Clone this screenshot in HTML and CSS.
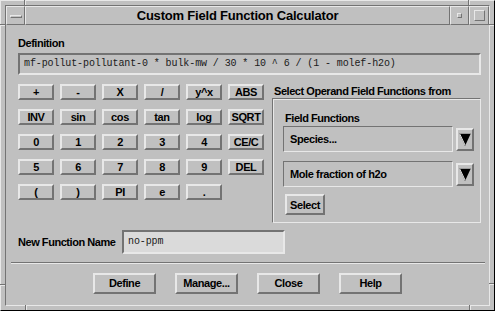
FILE: index.html
```html
<!DOCTYPE html>
<html>
<head>
<meta charset="utf-8">
<link rel="stylesheet" href="styles.css">
</head>
<body>
<div class="window">
  <div class="frame">
    <div class="titlebar">
      <div class="tb-cell tb-menu"><span class="menu-bar"></span></div>
      <div class="tb-cell tb-title">Custom Field Function Calculator</div>
      <div class="tb-cell tb-min"><span class="min-box"></span></div>
      <div class="tb-cell tb-max"><span class="max-box"></span></div>
    </div>
    <div class="client">
      <div class="label">Definition</div>
      <div class="def-field">mf-pollut-pollutant-0 * bulk-mw / 30 * 10 ^ 6 / (1 - molef-h2o)</div>
      <div class="middle">
        <div class="keypad">
          <button class="key">+</button><button class="key">-</button><button class="key">X</button><button class="key">/</button><button class="key">y^x</button><button class="key">ABS</button>
          <button class="key">INV</button><button class="key">sin</button><button class="key">cos</button><button class="key">tan</button><button class="key">log</button><button class="key">SQRT</button>
          <button class="key">0</button><button class="key">1</button><button class="key">2</button><button class="key">3</button><button class="key">4</button><button class="key">CE/C</button>
          <button class="key">5</button><button class="key">6</button><button class="key">7</button><button class="key">8</button><button class="key">9</button><button class="key">DEL</button>
          <button class="key">(</button><button class="key">)</button><button class="key">PI</button><button class="key">e</button><button class="key">.</button>
        </div>
        <div class="operand">
          <div class="label operand-label">Select Operand Field Functions from</div>
          <div class="group">
            <div class="label ff-label">Field Functions</div>
            <div class="option-row">
              <div class="option">Species...</div>
              <div class="arrow-btn"><svg width="14" height="19" viewBox="0 0 14 19"><polygon points="1,3 13,3 7,16" fill="#000"/><polyline points="1.5,3.5 7,15" stroke="#e8e8e8" stroke-width="1" fill="none"/><line x1="1" y1="3.5" x2="13" y2="3.5" stroke="#9a9a9a" stroke-width="1"/></svg></div>
            </div>
            <div class="option-row row2">
              <div class="option">Mole fraction of h2o</div>
              <div class="arrow-btn"><svg width="14" height="19" viewBox="0 0 14 19"><polygon points="1,3 13,3 7,16" fill="#000"/><polyline points="1.5,3.5 7,15" stroke="#e8e8e8" stroke-width="1" fill="none"/><line x1="1" y1="3.5" x2="13" y2="3.5" stroke="#9a9a9a" stroke-width="1"/></svg></div>
            </div>
            <button class="btn select-btn">Select</button>
          </div>
        </div>
      </div>
      <div class="name-row">
        <div class="label name-label">New Function Name</div>
        <div class="name-field">no-ppm</div>
      </div>
      <div class="separator"></div>
      <div class="actions">
        <button class="btn action">Define</button>
        <button class="btn action">Manage...</button>
        <button class="btn action">Close</button>
        <button class="btn action">Help</button>
      </div>
    </div>
  </div>
  <span class="mark mark-tl-v"></span>
  <span class="mark mark-tl-h"></span>
  <span class="mark mark-tr-v"></span>
  <span class="mark mark-tr-h"></span>
  <span class="mark mark-bl-v"></span>
  <span class="mark mark-bl-h"></span>
  <span class="mark mark-br-v"></span>
  <span class="mark mark-br-h"></span>
</div>
</body>
</html>
```

FILE: styles.css
```css
* { box-sizing: border-box; }
html, body { margin: 0; padding: 0; }
body {
  background: #c0c0c0;
  font-family: "Liberation Sans", Arial, sans-serif;
  color: #000;
}
.window {
  position: relative;
  width: 495px;
  height: 311px;
  background: #c0c0c0;
  border: 1px solid;
  border-color: #e8e8e8 #000 #000 #e8e8e8;
  padding: 4px;
}
.frame {
  height: 100%;
  display: flex;
  flex-direction: column;
  border: 1px solid;
  border-color: #737373 #e8e8e8 #e8e8e8 #737373;
}
.titlebar {
  display: flex;
  height: 19px;
  flex: none;
}
.tb-cell {
  height: 19px;
  border: 1px solid;
  border-color: #e8e8e8 #737373 #737373 #e8e8e8;
  display: flex;
  align-items: center;
  justify-content: center;
}
.tb-menu { width: 19px; }
.tb-min { width: 19px; }
.tb-max { width: 20px; }
.tb-title {
  flex: 1;
  font-weight: bold;
  font-size: 13px;
  line-height: 16px;
  letter-spacing: -0.2px;
}
.menu-bar {
  width: 12px;
  height: 3px;
  border: 1px solid;
  border-color: #e8e8e8 #737373 #737373 #e8e8e8;
  margin-top: 1px;
}
.min-box {
  width: 5px;
  height: 5px;
  border: 1px solid;
  border-color: #e8e8e8 #737373 #737373 #e8e8e8;
}
.max-box {
  width: 11px;
  height: 11px;
  border: 1px solid;
  border-color: #e8e8e8 #737373 #737373 #e8e8e8;
}
.client {
  flex: 1;
  display: flex;
  flex-direction: column;
  padding: 11px 8px 0 12px;
}
.label {
  font-weight: bold;
  font-size: 11px;
  line-height: 14px;
  letter-spacing: -0.45px;
  white-space: nowrap;
}
.operand-label {
  padding-left: 2px;
}
.def-field {
  margin-top: 3px;
  height: 22px;
  border: 2px solid;
  border-color: #737373 #e8e8e8 #e8e8e8 #737373;
  font-family: "Liberation Mono", "Courier New", monospace;
  font-size: 10px;
  letter-spacing: -0.1px;
  line-height: 18px;
  padding-left: 4px;
  white-space: pre;
  color: #1a1a1a;
}
.middle {
  display: flex;
  gap: 8px;
  margin-top: 9px;
}
.keypad {
  width: 246px;
  display: grid;
  grid-template-columns: repeat(6, 36px);
  grid-auto-rows: 16px;
  column-gap: 6px;
  row-gap: 9px;
  align-content: start;
}
.key, .btn {
  margin: 0;
  padding: 0;
  background: #c0c0c0;
  color: #000;
  border: 2px solid;
  border-color: #e8e8e8 #737373 #737373 #e8e8e8;
  font-family: "Liberation Sans", Arial, sans-serif;
  font-weight: bold;
  font-size: 11px;
  line-height: 12px;
  letter-spacing: -0.4px;
  text-align: center;
  white-space: nowrap;
}
.operand {
  width: 212px;
  display: flex;
  flex-direction: column;
}
.group {
  height: 125px;
  border: 1px solid;
  border-color: #737373 #e8e8e8 #e8e8e8 #737373;
  box-shadow: inset 1px 1px 0 #e8e8e8, 1px 1px 0 #737373 inset;
  padding: 11px 0 0 10px;
  display: flex;
  flex-direction: column;
  align-items: flex-start;
}
.ff-label {
  margin-left: 2px;
  margin-top: 1px;
}
.option-row {
  display: flex;
  align-items: center;
  gap: 3px;
  margin-top: 1px;
}
.option-row.row2 { margin-top: 9px; }
.option {
  width: 170px;
  height: 26px;
  border: 1px solid;
  border-color: #737373 #e8e8e8 #e8e8e8 #737373;
  font-weight: bold;
  font-size: 11px;
  line-height: 24px;
  letter-spacing: -0.4px;
  padding-left: 6px;
}
.arrow-btn {
  width: 18px;
  height: 23px;
  border: 2px solid;
  border-color: #e8e8e8 #737373 #737373 #e8e8e8;
  display: flex;
}
.select-btn {
  width: 40px;
  height: 21px;
  margin-top: 7px;
  margin-left: 2px;
  line-height: 16px;
}
.name-row {
  display: flex;
  align-items: center;
  margin-top: 7px;
}
.name-label {
  width: 104px;
}
.name-field {
  width: 163px;
  height: 24px;
  background: #dadada;
  border: 2px solid;
  border-color: #737373 #e8e8e8 #e8e8e8 #737373;
  font-family: "Liberation Mono", "Courier New", monospace;
  font-size: 10px;
  letter-spacing: -0.1px;
  line-height: 20px;
  padding-left: 4px;
  color: #1a1a1a;
}
.separator {
  height: 2px;
  border-top: 1px solid #737373;
  border-bottom: 1px solid #e8e8e8;
  margin: 8px -4px 0 -7px;
}
.actions {
  display: flex;
  justify-content: center;
  gap: 19px;
  margin: 9px -8px 0 -12px;
}
.action {
  width: 63px;
  height: 21px;
  line-height: 17px;
}
.mark {
  position: absolute;
  display: block;
}
.mark-tl-v, .mark-tr-v, .mark-bl-v, .mark-br-v {
  width: 2px;
  height: 5px;
  border-left: 1px solid #737373;
  border-right: 1px solid #e8e8e8;
}
.mark-tl-h, .mark-tr-h, .mark-bl-h, .mark-br-h {
  height: 2px;
  width: 5px;
  border-top: 1px solid #737373;
  border-bottom: 1px solid #e8e8e8;
}
.mark-tl-v { left: 23px; top: -1px; }
.mark-tl-h { left: -1px; top: 23px; }
.mark-tr-v { left: 467px; top: -1px; }
.mark-tr-h { left: 488px; top: 23px; }
.mark-bl-v { left: 24px; top: 304px; }
.mark-bl-h { left: -1px; top: 283px; }
.mark-br-v { left: 468px; top: 304px; }
.mark-br-h { left: 488px; top: 282px; }
```
